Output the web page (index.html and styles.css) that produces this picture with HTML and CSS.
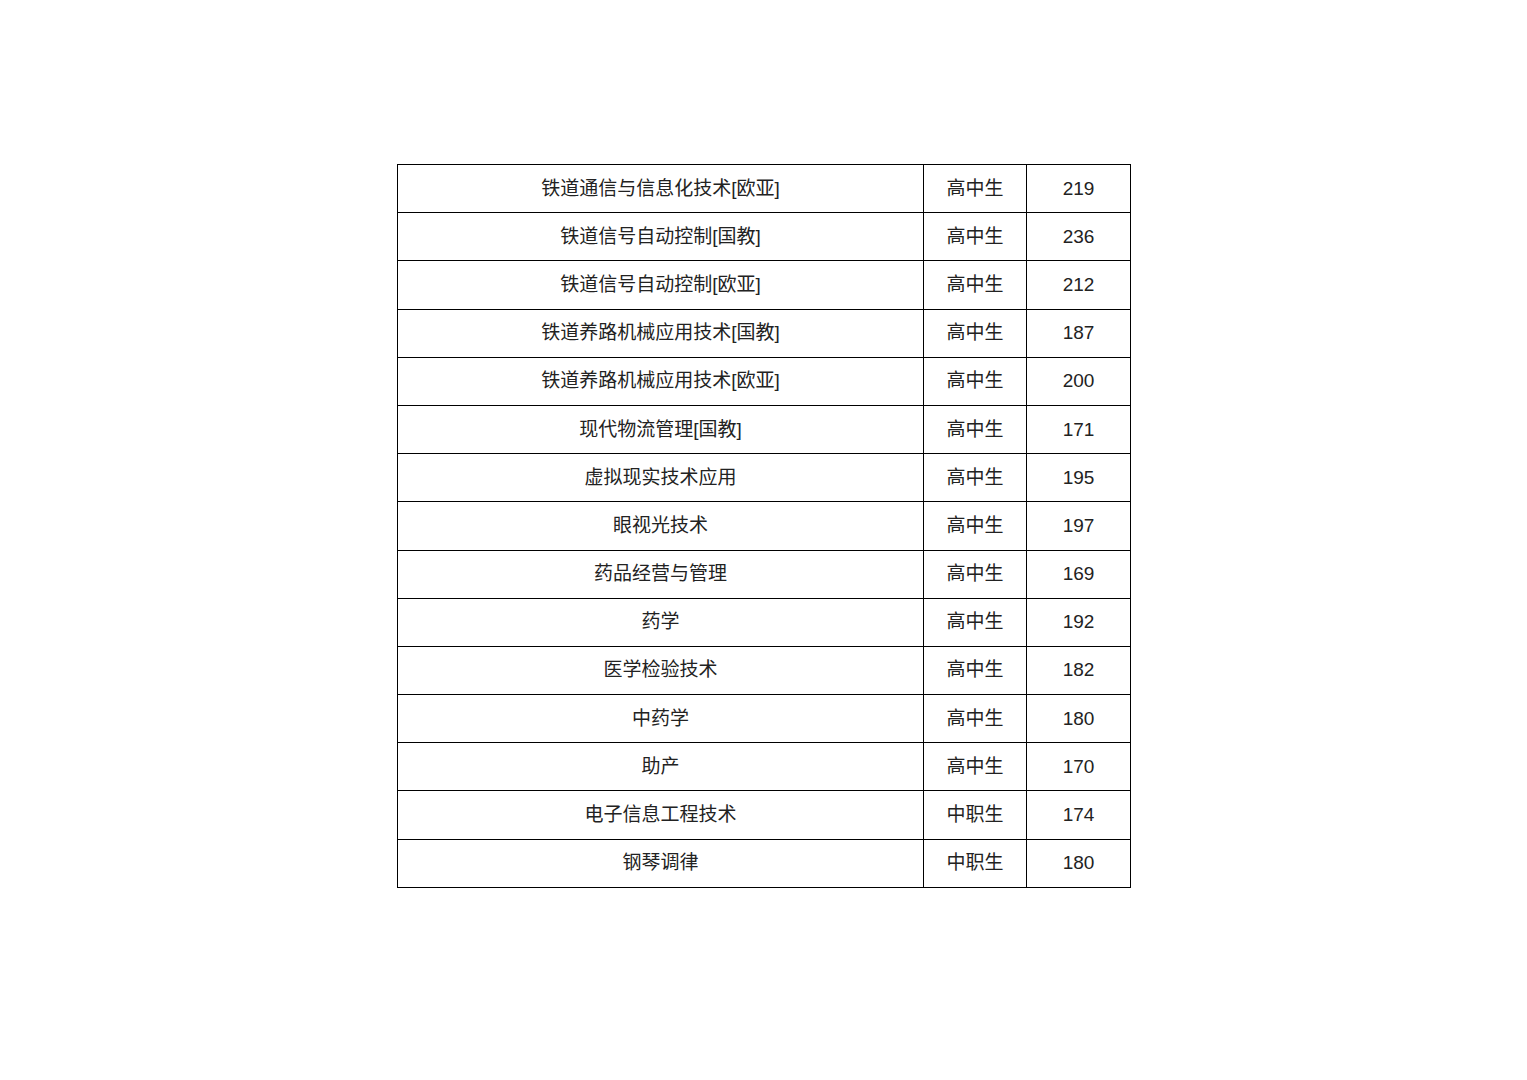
FILE: index.html
```html
<!DOCTYPE html>
<html lang="zh">
<head>
<meta charset="utf-8">
<title>专业分数</title>
<link rel="stylesheet" href="styles.css">
</head>
<body>
<div class="page">
<table class="scores">
<colgroup><col class="c-major"><col class="c-type"><col class="c-score"></colgroup>
<tbody>
<tr><td>铁道通信与信息化技术[欧亚]</td><td>高中生</td><td>219</td></tr>
<tr><td>铁道信号自动控制[国教]</td><td>高中生</td><td>236</td></tr>
<tr><td>铁道信号自动控制[欧亚]</td><td>高中生</td><td>212</td></tr>
<tr><td>铁道养路机械应用技术[国教]</td><td>高中生</td><td>187</td></tr>
<tr><td>铁道养路机械应用技术[欧亚]</td><td>高中生</td><td>200</td></tr>
<tr><td>现代物流管理[国教]</td><td>高中生</td><td>171</td></tr>
<tr><td>虚拟现实技术应用</td><td>高中生</td><td>195</td></tr>
<tr><td>眼视光技术</td><td>高中生</td><td>197</td></tr>
<tr><td>药品经营与管理</td><td>高中生</td><td>169</td></tr>
<tr><td>药学</td><td>高中生</td><td>192</td></tr>
<tr><td>医学检验技术</td><td>高中生</td><td>182</td></tr>
<tr><td>中药学</td><td>高中生</td><td>180</td></tr>
<tr><td>助产</td><td>高中生</td><td>170</td></tr>
<tr><td>电子信息工程技术</td><td>中职生</td><td>174</td></tr>
<tr><td>钢琴调律</td><td>中职生</td><td>180</td></tr>
</tbody>
</table>
</div>
</body>
</html>
```
FILE: styles.css
```css
html, body {
  margin: 0;
  padding: 0;
  background: #ffffff;
}
.page {
  padding: 164px 0 0 397px;
}
.scores {
  border-collapse: collapse;
  width: 733px;
  table-layout: fixed;
  font-family: "Liberation Sans", "Noto Sans CJK SC", sans-serif;
  font-size: 19px;
  color: #222222;
}
.c-major { width: 526px; }
.c-type { width: 103px; }
.c-score { width: 104px; }
.scores tr {
  height: 48.2px;
}
.scores td {
  border: 1px solid #000000;
  text-align: center;
  vertical-align: middle;
  padding: 0 0 1px 0;
  line-height: 1;
}
```
